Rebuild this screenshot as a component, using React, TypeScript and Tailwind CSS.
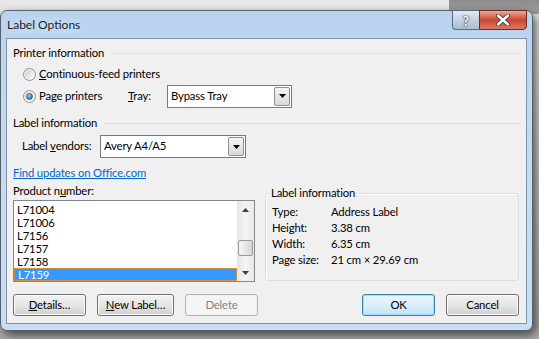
import type { ReactNode } from "react";

const uiFont = "font-['Segoe_UI','Lato',sans-serif]";

const GroupHeader = ({ title }: { title: string }) => (
  <div className="flex h-4 items-center gap-[7px] leading-4">
    <span>{title}</span>
    <div className="h-px flex-1 bg-[#d5dfe5]" />
  </div>
);

const Radio = ({ checked }: { checked?: boolean }) => (
  <svg width="13" height="13" viewBox="0 0 13 13" className="shrink-0">
    <defs>
      <linearGradient id={checked ? "rOn" : "rOff"} x1="0" y1="0" x2="1" y2="1">
        <stop offset="0" stopColor="#d0d0d0" />
        <stop offset="1" stopColor="#fbfbfb" />
      </linearGradient>
      <radialGradient id="dot" cx="0.4" cy="0.35" r="0.7">
        <stop offset="0" stopColor="#8fd1ff" />
        <stop offset="1" stopColor="#1c5a9c" />
      </radialGradient>
    </defs>
    <circle cx="6.5" cy="6.5" r="6" fill="#f4f4f4" stroke="#8e8f8f" />
    <circle cx="6.5" cy="6.5" r="4.5" fill={checked ? "url(#rOn)" : "url(#rOff)"} />
    {checked && <circle cx="6.5" cy="6.5" r="3" fill="url(#dot)" stroke="#2b4f7a" strokeWidth="0.6" />}
  </svg>
);

const Arrow = ({ up }: { up?: boolean }) => (
  <svg width="7" height="4" viewBox="0 0 7 4">
    <path d={up ? "M0 4 L3.5 0 L7 4 Z" : "M0 0 L7 0 L3.5 4 Z"} fill="#3c3c3c" />
  </svg>
);

const Combo = ({ value, width }: { value: string; width: string }) => (
  <div className={`flex h-[23px] items-stretch border border-[#7a7a7a] bg-white ${width}`}>
    <span className="flex flex-1 items-center pl-[3px]">{value}</span>
    <div className="m-px flex w-[16px] items-center justify-center rounded-[2px] border border-[#8e8f8f] bg-gradient-to-b from-[#f5f5f5] to-[#d9d9d9]">
      <svg width="7" height="4" viewBox="0 0 7 4">
        <path d="M0 0 L7 0 L3.5 4 Z" fill="#000" />
      </svg>
    </div>
  </div>
);

const Button = ({
  children,
  width,
  disabled,
  primary,
}: {
  children: ReactNode;
  width: string;
  disabled?: boolean;
  primary?: boolean;
}) => (
  <div
    className={`flex h-[22px] items-center justify-center rounded-[3px] border ${width} ${
      disabled
        ? "border-[#adb2b5] bg-[#f4f4f4] text-[#838383]"
        : primary
          ? "border-[#3c7fb1] bg-gradient-to-b from-[#eaf6fd] via-[#dceef9] to-[#bee6fd] shadow-[inset_0_0_0_1px_#a6dcf8]"
          : "border-[#707070] bg-gradient-to-b from-[#f2f2f2] via-[#e6e6e6] to-[#d0d0d0] shadow-[inset_0_0_0_1px_#fcfcfc]"
    }`}
  >
    {children}
  </div>
);

const products = ["L71004", "L71006", "L7156", "L7157", "L7158", "L7159"];

const details = [
  ["Type:", "Address Label"],
  ["Height:", "3.38 cm"],
  ["Width:", "6.35 cm"],
  ["Page size:", "21 cm × 29.69 cm"],
];

export default function App() {
  return (
    <div
      className={`relative h-[339px] w-[539px] overflow-hidden whitespace-nowrap bg-gradient-to-b from-[#e8e8e8] to-[#a9a9a9] pt-[10px] text-[11.3px] tracking-[-0.15px] text-black ${uiFont}`}
    >
      <div className="absolute right-0 top-0 h-[14px] w-[90px] bg-gradient-to-b from-[#8d8d8d] to-[#a0a0a0]" />
      <div className="relative flex h-[321px] w-[533px] flex-col rounded-[7px] border border-[#55616e] bg-gradient-to-b from-[#b9d3ef] via-[#c6dbf2] to-[#c9def3] px-[5px] pb-[6px] shadow-[3px_4px_10px_rgba(0,0,0,0.6)]">
        {/* title bar */}
        <div className="flex h-[27px] items-center pl-[1px] text-[12px] tracking-normal text-[#1b1b1b] [text-shadow:0_0_8px_#ffffff]">
          Label Options
        </div>
        <div className="absolute right-[5px] top-[-1px] flex h-[20px]">
          <div className="flex w-[27px] items-center justify-center rounded-bl-[4px] border border-r-0 border-[#5b6a7b] bg-gradient-to-b from-[#e3ebf3] via-[#c3d2e0] to-[#aabfd3] text-[14px] font-bold text-white [text-shadow:0_0_1px_#222,0_0_2px_#222]">
            ?
          </div>
          <div className="flex w-[48px] items-center justify-center rounded-br-[4px] border border-[#6d2a20] bg-gradient-to-b from-[#e9a99b] via-[#c9452f] to-[#d87a62]">
            <svg width="14" height="12" viewBox="0 0 14 12">
              <path d="M2 1.5 L12 10.5 M12 1.5 L2 10.5" stroke="#3b3b3b" strokeWidth="4.2" strokeLinecap="round" />
              <path d="M2 1.5 L12 10.5 M12 1.5 L2 10.5" stroke="#ffffff" strokeWidth="2.4" strokeLinecap="round" />
            </svg>
          </div>
        </div>

        {/* client area */}
        <div className="flex flex-1 flex-col border border-[#8193a7] bg-[#f0f0f0] pl-[6px] pr-[1px] pt-[6px]">
          <div className="pr-[4px]">
            <GroupHeader title="Printer information" />
          </div>
          <div className="mt-[2px] flex h-[22px] items-center pl-[10px]">
            <Radio />
            <span className="ml-[3px]">
              <span className="underline">C</span>ontinuous-feed printers
            </span>
          </div>
          <div className="flex h-[22px] items-center pl-[10px]">
            <div className="flex w-[105px] items-center">
              <Radio checked />
              <span className="ml-[3px]">
                Pa<span className="underline">g</span>e printers
              </span>
            </div>
            <span className="w-[39px]">
              <span className="underline">T</span>ray:
            </span>
            <Combo value="Bypass Tray" width="w-[125px]" />
          </div>

          <div className="mt-[8px] pr-[4px]">
            <GroupHeader title="Label information" />
          </div>
          <div className="mt-[4px] flex h-[23px] items-center pl-[9px]">
            <span className="w-[78px]">
              Label <span className="underline">v</span>endors:
            </span>
            <Combo value="Avery A4/A5" width="w-[146px]" />
          </div>
          <div className="mt-[7px] h-4 leading-4">
            <span className="text-[#0066cc] underline">Find updates on Office.com</span>
          </div>

          <div className="mt-[2px] flex">
            <div className="flex w-[242px] flex-col">
              <div className="h-4 leading-4">
                Product n<span className="underline">u</span>mber:
              </div>
              <div className="mt-px flex h-[82px] border border-[#828790] bg-white">
                <div className="flex-1 pt-[2px]">
                  {products.map((p) => (
                    <div
                      key={p}
                      className={`flex h-[13px] items-center pl-[3px] leading-[13px] ${
                        p === "L7159"
                          ? "border border-dotted border-[#e6a35c] bg-[#3399ff] pl-[2px] text-white"
                          : ""
                      }`}
                    >
                      {p}
                    </div>
                  ))}
                </div>
                <div className="flex w-[17px] flex-col bg-gradient-to-r from-[#e6e6e6] via-[#f3f3f3] to-[#eaeaea]">
                  <div className="flex h-[17px] items-center justify-center">
                    <Arrow up />
                  </div>
                  <div className="flex-1 px-px">
                    <div className="mt-[22px] h-[16px] rounded-[2px] border border-[#9a9a9a] bg-gradient-to-r from-[#f6f6f6] via-[#e9e9e9] to-[#d6d6d6]" />
                  </div>
                  <div className="flex h-[17px] items-center justify-center">
                    <Arrow />
                  </div>
                </div>
              </div>
            </div>

            <div className="ml-[10px] w-[254px] pt-[10px]">
              <div className="relative h-[88px] rounded-[3px] border border-[#d5dfe5] pl-[6px] pt-[10px] shadow-[inset_1px_1px_0_#ffffff]">
                <span className="absolute left-[4px] top-[-9px] bg-[#f0f0f0] px-px leading-4">
                  Label information
                </span>
                {details.map(([k, v]) => (
                  <div key={k} className="flex h-4 leading-4">
                    <span className="w-[59px]">{k}</span>
                    <span>{v}</span>
                  </div>
                ))}
              </div>
            </div>
          </div>

          <div className="mt-[12px] flex pr-[6px]">
            <Button width="w-[73px]">
              <span className="underline">D</span>etails…
            </Button>
            <div className="ml-[11px]">
              <Button width="w-[77px]">
                <span className="underline">N</span>ew Label…
              </Button>
            </div>
            <div className="ml-[11px]">
              <Button width="w-[73px]" disabled>
                Delete
              </Button>
            </div>
            <div className="ml-auto">
              <Button width="w-[73px]" primary>
                OK
              </Button>
            </div>
            <div className="ml-[11px]">
              <Button width="w-[73px]">Cancel</Button>
            </div>
          </div>
        </div>
      </div>
    </div>
  );
}
